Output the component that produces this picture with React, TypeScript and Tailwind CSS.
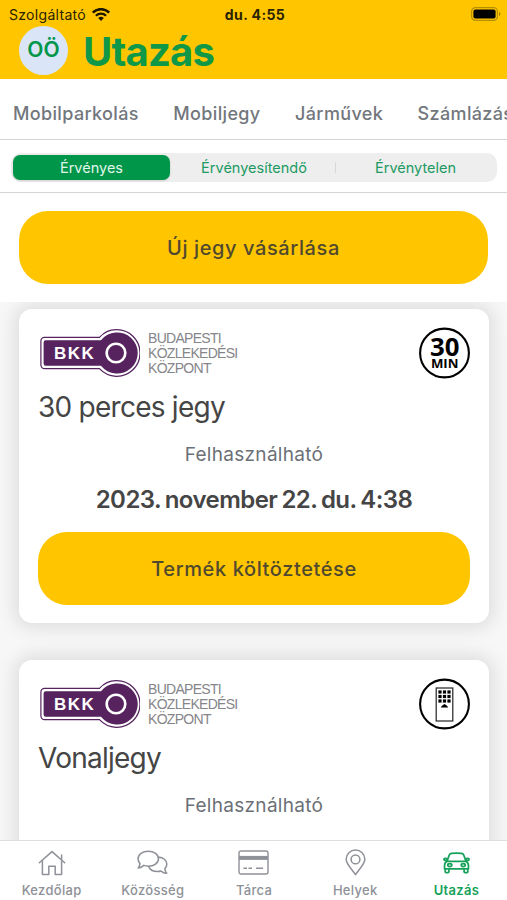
import React from 'react';
import clsx from 'clsx';

type Ticket = {
  id: string;
  name: string;
  status: string;
  validUntil?: string;
  action?: string;
  icon: React.ReactNode;
};

type NavItem = {
  label: string;
  icon: React.ReactNode;
  active?: boolean;
};

function WifiIcon() {
  return (
    <svg width="18" height="13" viewBox="0 0 18 13" fill="none" stroke="#1c1600">
      <path d="M.8 4.500a11.700 11.700 0 0 1 16.400 0" strokeWidth="2.500" />
      <path d="M3.900 7.700a7.300 7.300 0 0 1 10.200 0" strokeWidth="2.300" />
      <path d="M9 13 6.200 10.100a4 4 0 0 1 5.600 0Z" fill="#1c1600" stroke="none" />
    </svg>
  );
}

function BatteryIcon() {
  return (
    <svg width="30" height="14" viewBox="0 0 30 14">
      <rect x="0.6" y="0.6" width="25.8" height="12.8" rx="4" fill="none" stroke="#b58f00" strokeWidth="1.2" />
      <rect x="2.4" y="2.4" width="22.2" height="9.2" rx="2" fill="#000" />
      <path d="M28 4.8c1.9.8 1.9 3.6 0 4.4Z" fill="#a58200" />
    </svg>
  );
}

function BkkLogo() {
  return (
    <svg width="100" height="48" viewBox="0 0 100 48">
      <path
        d="M4.5 8.3H59.5A23.3 23.3 0 1 1 59.5 39.7H4.5A3.6 3.6 0 0 1 .9 36.1V11.9A3.6 3.6 0 0 1 4.5 8.3Z"
        fill="#fff"
        stroke="#56235f"
        strokeWidth="1.2"
      />
      <path
        d="M5.8 11.2H61A20.6 20.6 0 1 1 61 36.8H5.8A2.2 2.2 0 0 1 3.6 34.6V13.4A2.2 2.2 0 0 1 5.8 11.2Z"
        fill="#56235f"
      />
      <circle cx="76" cy="24" r="9.3" fill="none" stroke="#fff" strokeWidth="2.6" />
      <text
        x="14"
        y="30"
        fill="#fff"
        fontFamily="Liberation Sans, sans-serif"
        fontWeight="700"
        fontSize="17"
        letterSpacing="1.5"
      >
        BKK
      </text>
    </svg>
  );
}

function ThirtyMinIcon() {
  return (
    <svg width="52" height="52" viewBox="0 0 52 52">
      <circle cx="26.5" cy="26" r="24.4" fill="#fff" stroke="#000" strokeWidth="2.1" />
      <text
        x="26.7"
        y="28.5"
        textAnchor="middle"
        fontFamily="Open Sans, sans-serif"
        fontWeight="700"
        fontSize="24.5"
        textLength="29.5"
        lengthAdjust="spacingAndGlyphs"
      >
        30
      </text>
      <text
        x="26.7"
        y="40.5"
        textAnchor="middle"
        fontFamily="Open Sans, sans-serif"
        fontWeight="700"
        fontSize="13.2"
      >
        MIN
      </text>
    </svg>
  );
}

function LineTicketIcon() {
  const cells = [0, 1, 2];
  return (
    <svg width="52" height="52" viewBox="0 0 52 52">
      <circle cx="26.5" cy="26" r="24.4" fill="#fff" stroke="#000" strokeWidth="2.1" />
      <rect x="18.200" y="10" width="16.600" height="33" fill="#fff" stroke="#222" strokeWidth="1.2" />
      {cells.map((row) =>
        cells.map((col) => (
          <rect
            key={`${row}-${col}`}
            x={20.4 + col * 4.5}
            y={12.4 + row * 4.5}
            width="3.2"
            height="3.2"
            fill="#000"
          />
        ))
      )}
      <path d="M22.9 29.6c.7-1.8 2-2.4 3.6-3.5 1.6 1.1 2.9 1.7 3.6 3.5Z" fill="#000" />
    </svg>
  );
}

function HomeIcon() {
  return (
    <svg width="28" height="26" viewBox="0 0 28 26" fill="none" stroke="currentColor" strokeWidth="1.5" strokeLinejoin="round">
      <path d="M1.3 12.8 14 1.6l12.7 11.2" strokeLinecap="round" />
      <path d="M4.4 10.4v14h6.4v-8.2h6.4v8.2h6.4v-14" />
      <path d="M23.600 9.800V4.400" />
    </svg>
  );
}

function ChatIcon() {
  return (
    <svg width="31" height="25" viewBox="0 0 32 26" fill="none" stroke="currentColor" strokeWidth="1.6" strokeLinejoin="round">
      <path d="M11.6 1.2c6 0 10.6 3.3 10.6 7.8s-4.600 7.800-10.600 7.800c-1.700 0-3.300-.3-4.700-.8-1.400 1.500-3.300 2.500-5.700 2.600 1.200-1.500 1.800-3 1.800-4.600C1.700 12.700 1 10.900 1 9c0-4.500 4.600-7.800 10.600-7.800Z" />
      <path d="M22.200 7.400c5 .3 8.700 3.300 8.700 7.200 0 2-.8 3.700-2.100 4.900.1 1.800.8 3.300 2 4.700-2.500 0-4.500-.9-6-2.400-1.100.3-2.300.5-3.500.5-4.500 0-8.300-2.200-9.300-5.500" />
    </svg>
  );
}

function CardIcon() {
  return (
    <svg width="31" height="25" viewBox="0 0 31 25" fill="none" stroke="currentColor" strokeWidth="1.4">
      <rect x="1" y="1" width="29" height="23" rx="2" />
      <path d="M1 7.900h29" strokeWidth="4" />
      <path d="M5.500 18.200H9M10.500 18.200H14M18 18.200h7" />
    </svg>
  );
}

function PinIcon() {
  return (
    <svg width="21" height="27" viewBox="0 0 22 28" fill="none" stroke="currentColor" strokeWidth="1.6" strokeLinejoin="round">
      <path d="M11 26.800C7.500 21 1.200 16 1.200 10.700a9.800 9.700 0 0 1 19.600 0C20.800 16 14.500 21 11 26.800Z" />
      <circle cx="11" cy="10.800" r="4.600" />
    </svg>
  );
}

function CarIcon() {
  return (
    <svg width="27" height="22" viewBox="0 0 28 22" fill="none" stroke="currentColor" strokeWidth="1.8" strokeLinejoin="round">
      <path d="M4.200 9.200 6.400 3c.4-1.200 1.200-1.800 2.400-2 3.400-.4 7-.4 10.400 0 1.200.2 2 .8 2.400 2l2.200 6.200" />
      <path d="M4.200 9.200h19.600c1.800 1 2.600 2.600 2.600 4.600v3.400H1.600v-3.400c0-2 .8-3.600 2.600-4.600Z" />
      <path d="M4.600 7.800 3.800 6.400c-1.200-.4-2.400-.2-2.800.4 0 1.200.8 1.800 3 1.800M23.400 7.800l.8-1.400c1.200-.4 2.400-.2 2.800.4 0 1.200-.8 1.800-3 1.800" />
      <path d="M2.300 17.400v2.800c0 .6.300.9.900.9h2c.6 0 .9-.3.900-.9v-2.800M21.900 17.400v2.800c0 .6.300.9.900.9h2c.6 0 .9-.3.900-.9v-2.800" />
      <ellipse cx="7" cy="13.200" rx="2.100" ry="1.600" />
      <ellipse cx="21" cy="13.200" rx="2.100" ry="1.600" />
    </svg>
  );
}

const tickets: Ticket[] = [
  {
    id: 'ticket-30',
    name: '30 perces jegy',
    status: 'Felhasználható',
    validUntil: '2023. november 22. du. 4:38',
    action: 'Termék költöztetése',
    icon: <ThirtyMinIcon />,
  },
  {
    id: 'ticket-line',
    name: 'Vonaljegy',
    status: 'Felhasználható',
    icon: <LineTicketIcon />,
  },
];

const navItems: NavItem[] = [
  { label: 'Kezdőlap', icon: <HomeIcon /> },
  { label: 'Közösség', icon: <ChatIcon /> },
  { label: 'Tárca', icon: <CardIcon /> },
  { label: 'Helyek', icon: <PinIcon /> },
  { label: 'Utazás', icon: <CarIcon />, active: true },
];

function Header() {
  return (
    <header className="h-[79px] shrink-0 bg-[#ffc600]">
      <div className="grid h-[26px] grid-cols-3 items-center pl-[9px] pr-[6px] pt-0.5 text-[14px] text-[#2b2200]">
        <div className="flex items-center gap-[6px]">
          <span className="tracking-[0.3px]">Szolgáltató</span>
          <WifiIcon />
        </div>
        <div className="text-center font-bold tracking-[0.4px]">du. 4:55</div>
        <div className="flex justify-end">
          <BatteryIcon />
        </div>
      </div>
      <div className="flex pl-[19px]">
        <div className="flex size-[49px] items-center justify-center rounded-full bg-[#dae6f7] pb-[2px] text-[21px] font-semibold text-[#00964a]">
          OÖ
        </div>
        <h1 className="ml-[15px] mt-[2px] text-[40px] leading-[48px] font-bold tracking-[-0.8px] text-[#0f9848]">Utazás</h1>
      </div>
    </header>
  );
}

function SectionTabs() {
  return (
    <nav className="flex h-[61px] shrink-0 items-center gap-[34.5px] overflow-hidden border-b border-[#d2d4d6] pl-[13px] pt-2 text-[18px] font-medium tracking-[0.35px] whitespace-nowrap text-[#72777d]">
      <span>Mobilparkolás</span>
      <span>Mobiljegy</span>
      <span>Járművek</span>
      <span>Számlázás</span>
    </nav>
  );
}

function ValidityFilter() {
  return (
    <div className="h-[53px] shrink-0 border-b border-[#d2d4d6] pr-[10px] pl-[11px] pt-[13px]">
      <div className="flex h-[29px] items-center rounded-[10px] bg-[#eeeeee] p-[2px] text-center text-[14.5px] leading-[25px] text-[#219a62]">
        <div className="h-[25px] w-[157px] rounded-[7px] bg-[#00964a] text-[#e2f5e9] shadow-sm">Érvényes</div>
        <div className="flex-1 pl-[3px]">Érvényesítendő</div>
        <div className="h-[11px] w-px bg-[#d8d8d8]" />
        <div className="w-[159px]">Érvénytelen</div>
      </div>
    </div>
  );
}

function PillButton({ children }: { children: React.ReactNode }) {
  return (
    <button className="h-[73px] w-full rounded-[29px] bg-[#ffc600] text-[20px] font-medium tracking-[0.6px] text-[#50492f]">
      {children}
    </button>
  );
}

function TicketCard({ ticket }: { ticket: Ticket }) {
  return (
    <article className="h-[314px] shrink-0 rounded-[13px] bg-white px-[19px] pt-[18px] shadow-[0_0_18px_5px_rgba(0,0,0,0.1)]">
      <div className="flex h-[52px] items-center">
        <div className="ml-[2px]">
          <BkkLogo />
        </div>
        <div className="ml-[8px] font-['Liberation_Sans',sans-serif] text-[14px] leading-[15px] tracking-[-0.7px] text-[#85858a]">
          BUDAPESTI
          <br />
          KÖZLEKEDÉSI
          <br />
          KÖZPONT
        </div>
        <div className="ml-auto">{ticket.icon}</div>
      </div>
      <h2 className="mt-[10px] text-[28px] leading-9 tracking-[-0.75px] text-[#454545]">{ticket.name}</h2>
      <p className="mt-[17px] text-center text-[19px] leading-[26px] tracking-[0.3px] text-[#6b7076]">{ticket.status}</p>
      {ticket.validUntil && (
        <p className="mt-4 text-center text-[24px] leading-[32px] font-semibold tracking-[-0.55px] text-[#454545] [word-spacing:-1.4px]">
          {ticket.validUntil}
        </p>
      )}
      {ticket.action && (
        <div className="mt-[16px]">
          <PillButton>{ticket.action}</PillButton>
        </div>
      )}
    </article>
  );
}

function BottomNav() {
  return (
    <nav className="grid h-[60px] shrink-0 grid-cols-5 border-t border-[#dedede] bg-white pl-px">
      {navItems.map((item) => (
        <div
          key={item.label}
          className={clsx(
            'flex flex-col items-center',
            item.active ? 'font-semibold text-[#16a159]' : 'font-medium text-[#8e9197]'
          )}
        >
          <div className="flex h-[41px] items-center justify-center pt-[2px]">{item.icon}</div>
          <span className="text-[13px] leading-4 tracking-[0.3px]">{item.label}</span>
        </div>
      ))}
    </nav>
  );
}

export default function App() {
  return (
    <div className="flex h-[900px] w-[507px] flex-col overflow-hidden bg-white font-['Inter',sans-serif]">
      <Header />
      <SectionTabs />
      <ValidityFilter />
      <div className="h-[109px] shrink-0 px-[19px] pt-[18px]">
        <PillButton>Új jegy vásárlása</PillButton>
      </div>
      <main className="flex min-h-0 flex-1 flex-col gap-[37px] overflow-hidden bg-[#f7f7f7] pt-[7px] pr-[18px] pl-[19px]">
        {tickets.map((ticket) => (
          <TicketCard key={ticket.id} ticket={ticket} />
        ))}
      </main>
      <BottomNav />
    </div>
  );
}
